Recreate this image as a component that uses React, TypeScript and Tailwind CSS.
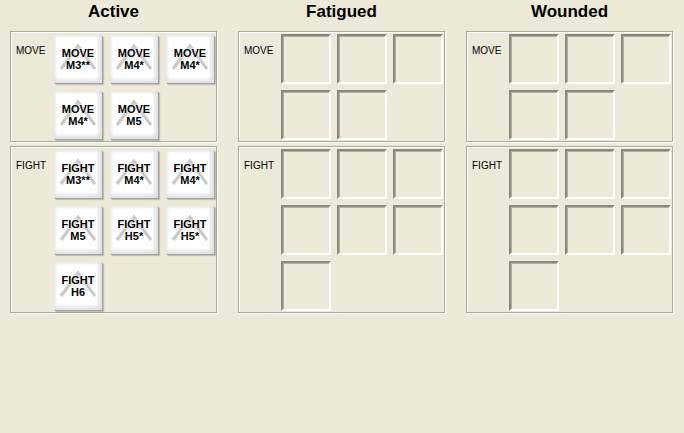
import React from 'react';

type Card = { kind: 'MOVE' | 'FIGHT'; value: string };

const activeMove = ['M3**', 'M4*', 'M4*', 'M4*', 'M5'];
const activeFight = ['M3**', 'M4*', 'M4*', 'M5', 'H5*', 'H5*', 'H6'];

// Raised card button with the faint chevron behind the label
function CardButton({ card }: { card: Card }) {
  return (
    <div className="w-[50px] h-[50px] pl-[1px] pt-[1px]">
      <div className="relative w-[48px] h-[48px] bg-white shadow-[1px_1px_0_#a4a4a4,2px_2px_1px_rgba(0,0,0,0.18),inset_-3px_-3px_4px_#dcdcdc,inset_2px_2px_2px_#ececec] flex flex-col items-center justify-center">
        <svg className="absolute inset-0" width="48" height="48" viewBox="0 0 48 48">
          <polyline points="7,34 24,11 41,34" fill="none" stroke="#c9c9c9" strokeWidth="3" />
        </svg>
        <span className="relative text-[11px] leading-[12px] font-bold text-black [text-shadow:0_0_2px_#fff,0_0_2px_#fff]">{card.kind}</span>
        <span className="relative text-[11px] leading-[12px] font-bold text-black [text-shadow:0_0_2px_#fff,0_0_2px_#fff]">{card.value}</span>
      </div>
    </div>
  );
}

function EmptySlot() {
  return (
    <div className="w-[50px] h-[50px] border-2 border-t-[#8a887c] border-l-[#8a887c] border-b-white border-r-white shadow-[inset_1px_1px_0_#b2b0a4]" />
  );
}

function Panel({ label, height, children }: { label: string; height: string; children: React.ReactNode }) {
  return (
    <div className={`flex w-[207px] ${height} border border-[#aca899] shadow-[1px_1px_0_#fff,inset_1px_1px_0_#fff]`}>
      <div className="w-[42px] pl-[5px] pt-[13px] text-[10px] leading-[12px] text-black">{label}</div>
      <div className="grid grid-cols-[50px_50px_50px] gap-[6px] pt-[2px] content-start">{children}</div>
    </div>
  );
}

function Column({ title, move, fight }: { title: string; move: React.ReactNode; fight: React.ReactNode }) {
  return (
    <div className="w-[207px] flex flex-col">
      <div className="h-[31px] pt-[2px] text-center text-[17px] leading-[20px] font-bold text-black">{title}</div>
      <Panel label="MOVE" height="h-[111px]">{move}</Panel>
      <div className="h-[4px]" />
      <Panel label="FIGHT" height="h-[167px]">{fight}</Panel>
    </div>
  );
}

export default function App() {
  const empty = (n: number) => Array.from({ length: n }, (_, i) => <EmptySlot key={i} />);
  return (
    <div className="w-[684px] h-[433px] bg-[#ece9d8] pl-[10px] flex gap-[21px] font-['Liberation_Sans',Arial,sans-serif]">
      <Column
        title="Active"
        move={activeMove.map((v, i) => <CardButton key={i} card={{ kind: 'MOVE', value: v }} />)}
        fight={activeFight.map((v, i) => <CardButton key={i} card={{ kind: 'FIGHT', value: v }} />)}
      />
      <Column title="Fatigued" move={empty(5)} fight={empty(7)} />
      <Column title="Wounded" move={empty(5)} fight={empty(7)} />
    </div>
  );
}
